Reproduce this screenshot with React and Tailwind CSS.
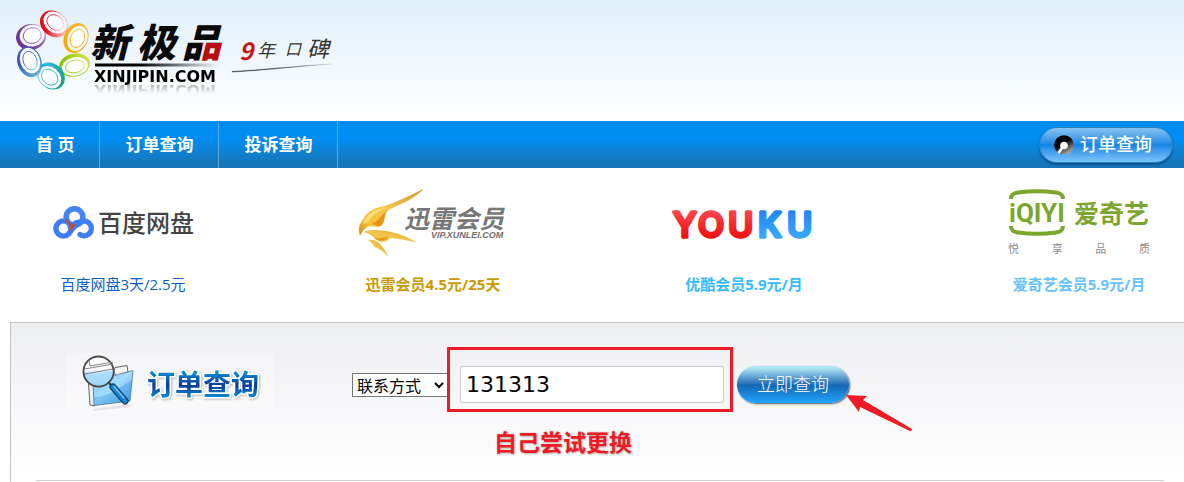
import React from 'react';

const RINGS = [
  { cx: 31, cy: 37, rx: 15, ry: 13, rot: -12, id: 'purple', from: '#6b3596', to: '#b68fd0', dx: 1.2, dy: -1.4 },
  { cx: 54, cy: 24, rx: 15, ry: 12.3, rot: 38, id: 'red', from: '#e3101a', to: '#fbd0d2', dx: 1.2, dy: -1.5 },
  { cx: 76, cy: 38, rx: 15.5, ry: 12, rot: -68, id: 'amber', from: '#f9a800', to: '#fbb52c', dx: 1.4, dy: 0.4 },
  { cx: 74.5, cy: 65, rx: 15.5, ry: 11.5, rot: -12, id: 'lime', from: '#8cc800', to: '#d9e04a', dx: 0.4, dy: 1.5 },
  { cx: 51, cy: 76, rx: 15, ry: 12.3, rot: 42, id: 'teal', from: '#2cb5d8', to: '#16a07a', dx: -1.3, dy: 1.2 },
  { cx: 29.5, cy: 62, rx: 15.5, ry: 12, rot: 70, id: 'blue', from: '#3f55b0', to: '#62b6e6', dx: 0.5, dy: -1.4 },
];

function RingsMark() {
  return (
    <svg className="h-[90px] w-[90px] shrink-0" viewBox="0 0 90 90" aria-hidden="true">
      <defs>
        {RINGS.map((r) => (
          <linearGradient key={r.id} id={'ring-' + r.id} x1="0" y1="0.6" x2="1" y2="0.3">
            <stop offset="0.3" stopColor={r.from} />
            <stop offset="1" stopColor={r.to} />
          </linearGradient>
        ))}
      </defs>
      {RINGS.map((r) => (
        <g key={r.id} transform={`translate(${r.cx} ${r.cy})`}>
          <ellipse rx={r.rx} ry={r.ry} transform={`rotate(${r.rot})`} fill={`url(#ring-${r.id})`} />
          <g transform={`translate(${r.dx} ${r.dy})`}>
            <ellipse rx={r.rx - 2.4} ry={r.ry - 2.2} transform={`rotate(${r.rot})`} fill="#f4f9fd" />
            <ellipse rx={r.rx - 6} ry={r.ry - 5.2} transform={`rotate(${r.rot})`} fill="#fbfdff" stroke={`url(#ring-${r.id})`} strokeWidth="0.8" />
          </g>
        </g>
      ))}
    </svg>
  );
}

function SiteLogo() {
  return (
    <a href="#" className="flex items-start text-black">
      <RingsMark />
      <span className="flex w-[132px] flex-col pt-5">
        <svg className="h-[48px] w-[132px] overflow-visible" viewBox="0 0 132 48">
          <defs>
            <pattern id="brush" patternUnits="userSpaceOnUse" width="140" height="48">
              <rect width="140" height="48" fill="#0a0a0a" />
              <rect x="112" y="23" width="28" height="20" fill="#b80d12" />
            </pattern>
            <linearGradient id="rule" x1="0" x2="1">
              <stop offset="0.35" stopColor="#000" />
              <stop offset="1" stopColor="#000" stopOpacity="0" />
            </linearGradient>
          </defs>
          <g fill="url(#brush)" className="font-['Noto_Sans_CJK_SC',sans-serif] font-black italic" fontSize="39">
            <text x="0" y="37">新</text>
            <text x="47" y="37">极</text>
            <text x="92" y="37">品</text>
          </g>
          <rect x="5" y="43.5" width="124" height="3" fill="url(#rule)" />
        </svg>
        <span className="pl-1 font-['DejaVu_Sans',sans-serif] text-[16px] leading-[18px] font-bold [-webkit-box-reflect:below_-5px_linear-gradient(transparent_30%,rgba(0,0,0,0.4))]">
          XINJIPIN.COM
        </span>
      </span>
      <svg className="mt-8 ml-2.5 h-[44px] w-[102px] overflow-visible" viewBox="0 0 102 44">
        <defs>
          <linearGradient id="sweep" x1="0" x2="1">
            <stop offset="0" stopColor="#222" />
            <stop offset="1" stopColor="#222" stopOpacity="0.15" />
          </linearGradient>
        </defs>
        <g className="font-['Noto_Sans_CJK_SC',sans-serif] italic" fill="#333">
          <text x="7" y="28" fontSize="24" fontWeight="700" fill="#c8141b">9</text>
          <text x="25" y="25" fontSize="18">年</text>
          <text x="53" y="23" fontSize="16">口</text>
          <text x="75" y="25" fontSize="22">碑</text>
        </g>
        <path d="M0 39.5 C40 37 70 33 100 32 C70 34 40 38 0 40Z" fill="url(#sweep)" stroke="url(#sweep)" strokeWidth="0.4" />
      </svg>
    </a>
  );
}

function BaiduLogo() {
  return (
    <span className="flex items-center gap-0.5">
      <svg className="h-[34px] w-[44px]" viewBox="0 0 44 34" fill="none" aria-hidden="true">
        <circle cx="22.500" cy="11" r="8.300" stroke="#4285f7" strokeWidth="5.600" />
        <path d="M18 21 C21 18 25 15.500 30 15.500 A7.300 7.300 0 1 1 28 28.500" stroke="#3f7cf6" strokeWidth="5.200" strokeLinecap="round" />
        <circle cx="11.500" cy="22.500" r="7.600" stroke="#3f7cf6" strokeWidth="5.400" />
        <path d="M16 28 L26 17" stroke="#3f7cf6" strokeWidth="5" />
        <path d="M14 13 C17 16.500 20 18.500 24 18.800 L17.500 26 C19 20 16.500 17 13 15.600Z" fill="#c04e2c" />
      </svg>
      <span className="text-[24px] leading-8 font-medium text-[#444]">百度网盘</span>
    </span>
  );
}

function XunleiLogo() {
  return (
    <svg className="h-[70px] w-[152px] overflow-visible" viewBox="0 0 152 70">
      <defs>
        <linearGradient id="gold" x1="0" y1="1" x2="1" y2="0">
          <stop offset="0" stopColor="#c98912" />
          <stop offset="0.2" stopColor="#f3c23a" />
          <stop offset="0.5" stopColor="#f4c648" />
          <stop offset="1" stopColor="#cf9a35" />
        </linearGradient>
      </defs>
      <path d="M3 47.500 C1 41 2 37 5 33 C9 25 15 20 26 18.500 C40 14 54 7 67 0.500 C60 9 45 16 32 21.500 C27 25 29 33 24 38 C19 41 14 36 9 40 C6 42 5 44 3 47.500Z" fill="url(#gold)" />
      <path d="M6 36 C10 26 17 21 29 20 C22 23 15 27 11 34Z" fill="#fbe58c" fillOpacity="0.8" />
      <path d="M15 35 C21 34 24 28 29 23 C27 28 28 34 24 37.500 C20 39 17 37 15 35Z" fill="#e59217" />
      <path d="M7 44 C12 41 20 42 29 43 C40 45 50 48 60 55 C50 52 42 51 33 50 C28 56 21 54 17 50 C14 46 11 46 7 44Z" fill="url(#gold)" />
      <path d="M18 50 C22 51 27 50 31 48 C29 54 22 54 18 50Z" fill="#e79a18" />
      <path d="M11 52 C16 51 21 53 24 57 C27 61 30 64 31 69 C28 65 24 62 20 60 C17 60 16 55 11 52Z" fill="url(#gold)" />
      <text x="47" y="40" fontSize="25" fill="#777" className="font-['Noto_Sans_CJK_SC',sans-serif] font-bold italic">
        迅雷会员
      </text>
      <text x="74" y="50" fontSize="9" fill="#707070" className="font-['Liberation_Sans',sans-serif] font-bold italic">
        VIP.XUNLEI.COM
      </text>
    </svg>
  );
}

function YoukuLogo() {
  return (
    <svg className="h-[40px] w-[148px] overflow-visible" viewBox="0 0 148 40">
      <defs>
        <linearGradient id="yk-red" x1="0" y1="0" x2="0" y2="1">
          <stop offset="0.2" stopColor="#f9424a" />
          <stop offset="0.8" stopColor="#ee1212" />
        </linearGradient>
        <linearGradient id="yk-blue" x1="0" y1="0" x2="0" y2="1">
          <stop offset="0.2" stopColor="#2288f5" />
          <stop offset="0.8" stopColor="#35a8fb" />
        </linearGradient>
      </defs>
      <g className="font-['Inter',sans-serif] font-medium" fontSize="34" strokeWidth="3.500" strokeLinejoin="round">
        <text x="3" y="34" fill="url(#yk-red)" stroke="url(#yk-red)">Y</text>
        <text x="28" y="34" fill="url(#yk-red)" stroke="url(#yk-red)">O</text>
        <text x="58" y="34" fill="url(#yk-red)" stroke="url(#yk-red)">U</text>
        <text x="88" y="34" fill="url(#yk-blue)" stroke="url(#yk-blue)">K</text>
        <text x="117" y="34" fill="url(#yk-blue)" stroke="url(#yk-blue)">U</text>
      </g>
    </svg>
  );
}

function IqiyiLogo() {
  return (
    <span className="flex w-[142px] flex-col">
      <span className="flex items-center gap-2">
        <svg className="h-[48px] w-[58px] shrink-0 overflow-visible" viewBox="0 0 58 48">
          <g fill="none" stroke="#7aa62c" strokeWidth="4">
            <path d="M3 10 C3 5 6 4 10 3.500 C22 2 36 2 48 3.500 C52 4 55 5 55 10" />
            <path d="M3 37 C3 42 6 43 10 43.500 C22 45 36 45 48 43.500 C52 43 55 42 55 37" />
          </g>
          <text x="1" y="33" fontSize="26" fill="#7aa62c" className="font-['Roboto',sans-serif] font-bold">iQIYI</text>
        </svg>
        <span className="text-[25px] leading-8 font-bold whitespace-nowrap text-[#7ba632]">爱奇艺</span>
      </span>
      <span className="mt-1 flex justify-between text-[11px] leading-4 text-[#8a8a8a]">
        <span>悦</span>
        <span>享</span>
        <span>品</span>
        <span>质</span>
      </span>
    </span>
  );
}

function FolderSearchIcon() {
  return (
    <svg className="h-[60px] w-[56px] shrink-0" viewBox="0 0 56 60" aria-hidden="true">
      <defs>
        <linearGradient id="folder" x1="0" y1="0" x2="1" y2="1">
          <stop offset="0" stopColor="#7cc8f8" />
          <stop offset="0.5" stopColor="#a4dcfc" />
          <stop offset="1" stopColor="#3f9fe6" />
        </linearGradient>
        <linearGradient id="lens" x1="0" y1="0" x2="0" y2="1">
          <stop offset="0.45" stopColor="#fafafa" />
          <stop offset="0.55" stopColor="#b9e4fa" />
          <stop offset="1" stopColor="#8ccdf5" />
        </linearGradient>
      </defs>
      <path d="M10 56 L46 51 L49 54 L12 58Z" fill="#000" fillOpacity="0.08" />
      <path d="M6 24 L8 52 L13 53 L12 24Z" fill="#eee" stroke="#555" strokeWidth="0.9" />
      <path d="M32 18 L33 14.500 L45 12.500 L46 19 L34 24Z" fill="#f3f3f3" stroke="#555" strokeWidth="0.9" />
      <path d="M11 28 L51 17.500 L48 48 L12 52.500Z" fill="url(#folder)" stroke="#5f7f94" strokeWidth="0.9" />
      <path d="M12 44 C24 45 38 34 50 27 L48 48 L12 52.500Z" fill="#1d86dc" fillOpacity="0.3" />
      <circle cx="16.500" cy="18.500" r="15" fill="url(#lens)" stroke="#4a4a4a" strokeWidth="1.900" />
      <path d="M7 7 L8 13 L31 9 M2.500 16 L31 11 M3 21 L31 16" stroke="#777" strokeWidth="0.9" fill="none" />
      <path d="M3 22 C13 23 23 19 31 17 C31 27 24 32.500 17 32.500 C10 32.500 5 28 3 22Z" fill="#a4dcfb" fillOpacity="0.7" />
      <path d="M26 29 L31 34" stroke="#444" strokeWidth="2.400" />
      <path d="M31 34 L43 48" stroke="#123a5c" strokeWidth="7" strokeLinecap="round" />
      <path d="M31 34 L43 48" stroke="#1c83d2" strokeWidth="4.800" strokeLinecap="round" />
      <path d="M32 33.500 L42 45" stroke="#7cc6f5" strokeWidth="1.300" strokeLinecap="round" />
    </svg>
  );
}

const NAV = ['首 页', '订单查询', '投诉查询'];

const SERVICES = [
  { name: '百度网盘3天/2.5元', Logo: BaiduLogo, box: 'w-[146px]', text: 'text-[#0a5fc8]' },
  { name: '迅雷会员4.5元/25天', Logo: XunleiLogo, box: 'w-[152px]', text: 'font-bold text-[#cc9900]' },
  { name: '优酷会员5.9元/月', Logo: YoukuLogo, box: 'w-[148px]', text: 'font-bold text-[#33bbff]' },
  { name: '爱奇艺会员5.9元/月', Logo: IqiyiLogo, box: 'w-[200px]', text: 'font-bold text-[#66c2ff]' },
];

export default function App() {
  return (
    <div className="flex min-h-screen flex-col bg-white font-['Open_Sans','Noto_Sans_CJK_SC',sans-serif]">
      <header className="flex h-[121px] items-start bg-linear-to-b from-[#e0effa] to-white">
        <SiteLogo />
      </header>

      <nav className="flex h-[47px] items-center justify-between bg-linear-to-b from-[#008cf0] from-40% to-[#1676b9] to-90% pr-[11px] pl-[11px]">
        <ul className="flex h-full">
          {NAV.map((label) => (
            <li key={label} className="border-r border-[#5aa9dc]">
              <a href="#" className="flex h-full items-center px-[25px] text-[17px] font-bold text-white">{label}</a>
            </li>
          ))}
        </ul>
        <a
          href="#"
          className="flex h-[36px] w-[134px] items-center gap-1.5 rounded-full border border-[#2b7fc0] bg-linear-to-b from-[#84c3f3] via-[#0f86e4] via-50% to-[#7cc4fa] pl-3.5 text-[18px] font-medium text-white shadow-[0_2px_2px_rgba(0,50,100,0.5)]"
        >
          <svg className="h-5 w-5 shrink-0" viewBox="0 0 20 20" aria-hidden="true">
            <defs>
              <linearGradient id="disc" x1="0" y1="0" x2="0.6" y2="1">
                <stop offset="0.5" stopColor="#050505" />
                <stop offset="1" stopColor="#aaa" />
              </linearGradient>
            </defs>
            <circle cx="10" cy="10" r="9.800" fill="url(#disc)" />
            <path d="M4.500 18 L8.500 12.500" stroke="#fff" strokeWidth="2.600" />
            <circle cx="10" cy="10.500" r="3.800" fill="#fff" />
          </svg>
          订单查询
        </a>
      </nav>

      <section className="flex justify-between pr-[5px] pb-[26px] pl-[50px]">
        {SERVICES.map(({ name, Logo, box, text }) => (
          <a key={name} href="#" className={`flex flex-col items-center ${box}`}>
            <span className="flex h-[105px] items-center pt-1">
              <Logo />
            </span>
            <span className={`text-[15px] leading-[23px] whitespace-nowrap ${text}`}>{name}</span>
          </a>
        ))}
      </section>

      <main className="ml-2.5 flex flex-1 flex-col border-t border-l border-[#c4c4c4] bg-linear-to-b from-[#edeef2] to-white">
        <form className="mt-[30px] flex h-[63px] items-center pl-[55px]" onSubmit={(e) => e.preventDefault()}>
          <h1 className="flex h-[60px] w-[208px] shrink-0 items-center gap-2 self-start bg-white/30 pl-4">
            <FolderSearchIcon />
            <svg className="h-[40px] w-[120px] overflow-visible" viewBox="0 0 120 40">
              <defs>
                <linearGradient id="title" x1="0" y1="0" x2="0" y2="1">
                  <stop offset="0.25" stopColor="#0a86d2" />
                  <stop offset="0.55" stopColor="#0b3d94" />
                  <stop offset="0.62" stopColor="#0b4aa0" />
                  <stop offset="0.85" stopColor="#0a8ad6" />
                </linearGradient>
              </defs>
              <text x="1" y="32" fontSize="28" fill="url(#title)" stroke="#fff" strokeWidth="3" paintOrder="stroke" strokeLinejoin="round" className="font-['Noto_Sans_CJK_SC',sans-serif] font-bold drop-shadow-[1px_1px_1px_rgba(0,0,0,0.25)]">
                订单查询
              </text>
            </svg>
          </h1>

          <select aria-label="查询方式" className="ml-[78px] h-6 w-[96px] shrink-0 border border-[#767676] bg-white text-[16px] leading-5 text-black">
            <option>联系方式</option>
          </select>

          <div className="relative ml-3 shrink-0">
            <input
              type="text"
              aria-label="联系方式"
              defaultValue="131313"
              className="block h-[37px] w-[264px] rounded-xs border border-[#ccc] bg-white px-[5px] font-['DejaVu_Sans',sans-serif] text-[22px] text-black outline-none"
            />
            <div className="pointer-events-none absolute -top-[19px] -left-[13px] h-[65px] w-[286px] border-[3px] border-[#ed1c24]" />
            <p className="absolute top-[60px] left-[34px] text-[23px] leading-8 font-bold whitespace-nowrap text-[#ed1c24] [text-shadow:0_0_2px_#bbb,1px_1px_2px_#bbb]">
              自己尝试更换
            </p>
          </div>

          <div className="relative ml-[13px] shrink-0">
            <button
              type="submit"
              className="block h-[37px] w-[112px] rounded-full bg-linear-to-b from-[#b0e6f4] from-5% via-[#1767b4] via-52% to-[#1fa6ff] text-[18px] font-light text-white shadow-[1px_1px_2px_#555]"
            >
              立即查询
            </button>
            <svg className="pointer-events-none absolute top-[29px] left-[109px] h-[38px] w-[68px]" viewBox="0 0 68 38" aria-hidden="true">
              <path d="M0 0 L21 1 L17 5 L66 34 L65 36.500 L14 12 L13 17Z" fill="#ed1c24" />
            </svg>
          </div>
        </form>
        <hr className="mt-[64px] mr-5 ml-[25px] border-[#d4d4d4]" />
      </main>
    </div>
  );
}
